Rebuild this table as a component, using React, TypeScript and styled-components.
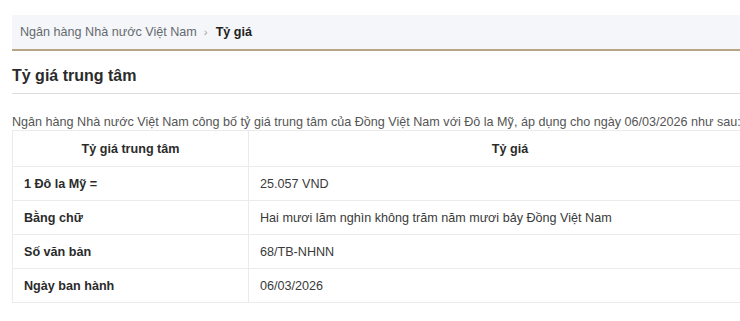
import React from 'react';
import styled, { createGlobalStyle } from 'styled-components';

const GlobalStyle = createGlobalStyle`
  html, body {
    margin: 0;
    padding: 0;
    background: #ffffff;
    overflow: hidden;
  }
  body {
    font-family: "Liberation Sans", Arial, sans-serif;
  }
`;

const Page = styled.div`
  width: 760px;
  padding: 15px 0 0 12px;
`;

const Breadcrumb = styled.nav`
  display: flex;
  align-items: center;
  height: 34px;
  padding-left: 8px;
  background: #f4f6f9;
  border-bottom: 2px solid #b8a585;
  font-size: 12.6px;
  color: #666a70;
`;

const Crumb = styled.span<{ current?: boolean }>`
  color: ${({ current }) => (current ? '#222' : '#666a70')};
  font-weight: ${({ current }) => (current ? 'bold' : 'normal')};
`;

const Separator = styled.span`
  margin: 0 8px 0 7px;
  color: #a0a0a0;
  font-size: 11.5px;
`;

const Title = styled.h1`
  margin: 16px 0 0;
  padding-bottom: 8px;
  border-bottom: 1px solid #dedede;
  font-size: 16px;
  font-weight: bold;
  color: #2b2b2b;
`;

const Intro = styled.p`
  margin: 21px 0 0;
  font-size: 12.6px;
  line-height: 15px;
  color: #555;
  white-space: nowrap;
`;

const Table = styled.table`
  margin-top: 0;
  width: 100%;
  border-collapse: collapse;
  font-size: 12.6px;
  color: #333;
`;

const HeadCell = styled.th`
  height: 35px;
  padding: 0 12px;
  border: 1px solid #ebebeb;
  font-weight: bold;
  text-align: center;
  color: #2b2b2b;
`;

const Cell = styled.td<{ label?: boolean }>`
  height: 33px;
  padding: 0 11px;
  border: 1px solid #ebebeb;
  font-weight: ${({ label }) => (label ? 'bold' : 'normal')};
  color: ${({ label }) => (label ? '#2b2b2b' : '#3a3a3a')};
`;

const rows = [
  ['1 Đô la Mỹ =', '25.057 VND'],
  ['Bằng chữ', 'Hai mươi lăm nghìn không trăm năm mươi bảy Đồng Việt Nam'],
  ['Số văn bản', '68/TB-NHNN'],
  ['Ngày ban hành', '06/03/2026'],
];

const App: React.FC = () => {
  return (
    <>
      <GlobalStyle />
      <Page>
        <Breadcrumb>
          <Crumb>Ngân hàng Nhà nước Việt Nam</Crumb>
          <Separator>›</Separator>
          <Crumb current>Tỷ giá</Crumb>
        </Breadcrumb>
        <Title>Tỷ giá trung tâm</Title>
        <Intro>
          Ngân hàng Nhà nước Việt Nam công bố tỷ giá trung tâm của Đồng Việt Nam với Đô la Mỹ, áp dụng cho ngày 06/03/2026 như sau:
        </Intro>
        <Table>
          <colgroup>
            <col style={{ width: 236 }} />
            <col />
          </colgroup>
          <thead>
            <tr>
              <HeadCell>Tỷ giá trung tâm</HeadCell>
              <HeadCell>Tỷ giá</HeadCell>
            </tr>
          </thead>
          <tbody>
            {rows.map(([label, value]) => (
              <tr key={label}>
                <Cell label>{label}</Cell>
                <Cell>{value}</Cell>
              </tr>
            ))}
          </tbody>
        </Table>
      </Page>
    </>
  );
};

export default App;
